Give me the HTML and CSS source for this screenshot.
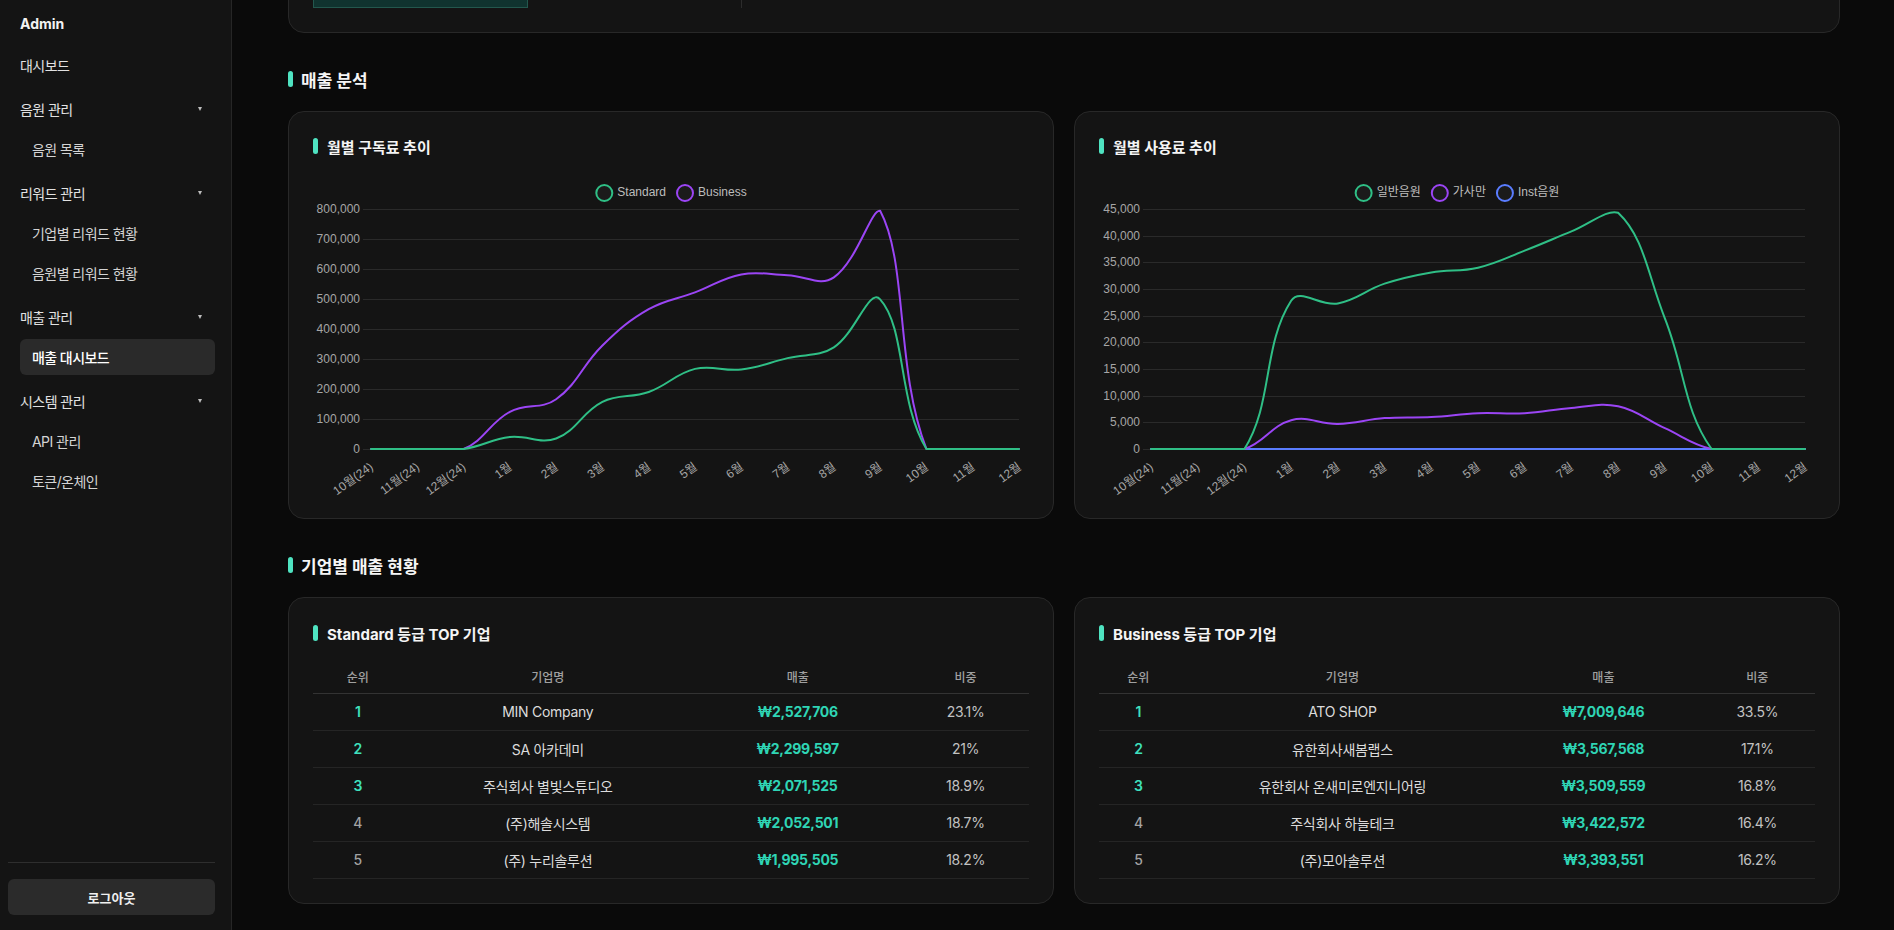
FILE: index.html
```html
<!DOCTYPE html>
<html lang="ko">
<head>
<meta charset="utf-8">
<title>매출 대시보드</title>
<link rel="stylesheet" href="styles.css">
</head>
<body>
<aside class="sidebar">
  <div class="brand">Admin</div>
  <nav class="nav">
    <div class="nav-group">
      <div class="nav-head">대시보드</div>
    </div>
    <div class="nav-group">
      <div class="nav-head">음원 관리<span class="caret"></span></div>
      <div class="nav-item">음원 목록</div>
    </div>
    <div class="nav-group">
      <div class="nav-head">리워드 관리<span class="caret"></span></div>
      <div class="nav-item">기업별 리워드 현황</div>
      <div class="nav-item">음원별 리워드 현황</div>
    </div>
    <div class="nav-group">
      <div class="nav-head">매출 관리<span class="caret"></span></div>
      <div class="nav-item active">매출 대시보드</div>
    </div>
    <div class="nav-group">
      <div class="nav-head">시스템 관리<span class="caret"></span></div>
      <div class="nav-item">API 관리</div>
      <div class="nav-item">토큰/온체인</div>
    </div>
  </nav>
  <div class="sidebar-foot">
    <div class="foot-line"></div>
    <button class="logout">로그아웃</button>
  </div>
</aside>

<main class="main">
  <div class="card top-card">
    <div class="top-row">
      <div class="top-left"><div class="top-bar"></div></div>
      <div class="top-right"></div>
    </div>
  </div>

  <section class="section">
    <h2 class="section-title"><span class="accent"></span>매출 분석</h2>
    <div class="grid2">
      <div class="card chart-card">
        <h3 class="card-title"><span class="accent"></span>월별 구독료 추이</h3>
        <svg class="chart" id="chart-fee"></svg>
      </div>
      <div class="card chart-card">
        <h3 class="card-title"><span class="accent"></span>월별 사용료 추이</h3>
        <svg class="chart" id="chart-use"></svg>
      </div>
    </div>
  </section>

  <section class="section">
    <h2 class="section-title"><span class="accent"></span>기업별 매출 현황</h2>
    <div class="grid2">
      <div class="card table-card">
        <h3 class="card-title"><span class="accent"></span>Standard 등급 TOP 기업</h3>
        <table class="rank-table std">
          <colgroup><col class="c1"><col class="c2"><col class="c3"><col class="c4"></colgroup>
          <thead><tr><th>순위</th><th>기업명</th><th>매출</th><th>비중</th></tr></thead>
          <tbody>
            <tr><td class="rank top">1</td><td>MIN Company</td><td class="amount">₩2,527,706</td><td class="pct">23.1%</td></tr>
            <tr><td class="rank top">2</td><td>SA 아카데미</td><td class="amount">₩2,299,597</td><td class="pct">21%</td></tr>
            <tr><td class="rank top">3</td><td>주식회사 별빛스튜디오</td><td class="amount">₩2,071,525</td><td class="pct">18.9%</td></tr>
            <tr><td class="rank">4</td><td>(주)해솔시스템</td><td class="amount">₩2,052,501</td><td class="pct">18.7%</td></tr>
            <tr><td class="rank">5</td><td>(주) 누리솔루션</td><td class="amount">₩1,995,505</td><td class="pct">18.2%</td></tr>
          </tbody>
        </table>
      </div>
      <div class="card table-card">
        <h3 class="card-title"><span class="accent"></span>Business 등급 TOP 기업</h3>
        <table class="rank-table biz">
          <colgroup><col class="c1"><col class="c2"><col class="c3"><col class="c4"></colgroup>
          <thead><tr><th>순위</th><th>기업명</th><th>매출</th><th>비중</th></tr></thead>
          <tbody>
            <tr><td class="rank top">1</td><td>ATO SHOP</td><td class="amount">₩7,009,646</td><td class="pct">33.5%</td></tr>
            <tr><td class="rank top">2</td><td>유한회사새봄랩스</td><td class="amount">₩3,567,568</td><td class="pct">17.1%</td></tr>
            <tr><td class="rank top">3</td><td>유한회사 온새미로엔지니어링</td><td class="amount">₩3,509,559</td><td class="pct">16.8%</td></tr>
            <tr><td class="rank">4</td><td>주식회사 하늘테크</td><td class="amount">₩3,422,572</td><td class="pct">16.4%</td></tr>
            <tr><td class="rank">5</td><td>(주)모아솔루션</td><td class="amount">₩3,393,551</td><td class="pct">16.2%</td></tr>
          </tbody>
        </table>
      </div>
    </div>
  </section>
</main>
<script src="app.js"></script>
</body>
</html>
```

FILE: styles.css
```css
* { box-sizing: border-box; margin: 0; padding: 0; }
html, body { height: 100%; }
body {
  font-family: Inter, "Noto Sans CJK KR", "Noto Sans", sans-serif;
  background: #0a0a0a;
  color: #e8e8e8;
  display: flex;
  height: 100vh;
  overflow: hidden;
}

/* Sidebar */
.sidebar {
  width: 232px;
  flex: none;
  background: #141414;
  border-right: 1px solid #262626;
  display: flex;
  flex-direction: column;
  padding-top: 13px;
}
.brand {
  padding-left: 20px;
  font-size: 14px;
  font-weight: 700;
  line-height: 22px;
  color: #f2f2f2;
  margin-bottom: 12px;
}
.nav {
  display: flex;
  flex-direction: column;
  gap: 8px;
  padding: 0 16px 0 20px;
}
.nav-group { display: flex; flex-direction: column; gap: 4px; }
.nav-head {
  height: 36px;
  display: flex;
  align-items: center;
  justify-content: space-between;
  padding-right: 13px;
  font-size: 14px;
  color: #e2e2e2;
  letter-spacing: -0.04em;
}
.caret {
  width: 0;
  height: 0;
  border-left: 2.5px solid transparent;
  border-right: 2.5px solid transparent;
  border-top: 4px solid #bdbdbd;
}
.nav-item {
  height: 36px;
  display: flex;
  align-items: center;
  padding-left: 12px;
  font-size: 14px;
  color: #d4d4d4;
  border-radius: 6px;
  letter-spacing: -0.04em;
}
.nav-item.active { background: #2a2a2a; color: #fff; font-weight: 500; }
.sidebar-foot { margin-top: auto; padding: 0 16px 15px 8px; }
.foot-line { height: 1px; background: #2e2e2e; }
.logout {
  margin-top: 16px;
  width: 100%;
  height: 36px;
  border: 0;
  border-radius: 6px;
  background: #2b2b2b;
  color: #f0f0f0;
  font-family: Inter, "Noto Sans CJK KR", sans-serif;
  font-size: 13px;
  font-weight: 600;
}

/* Main */
.main {
  flex: 1;
  min-width: 0;
  padding: 0 54px 0 56px;
  overflow: hidden;
}
.card {
  background: #141414;
  border: 1px solid #282828;
  border-radius: 16px;
}
.top-card {
  height: 110px;
  margin-top: -77px;
  padding: 24px;
}
.top-row { display: flex; height: 60px; }
.top-left { width: 428px; display: flex; align-items: flex-end; }
.top-bar { width: 215px; height: 40px; background: #10332f; border: 1px solid #23574d; }
.top-right { border-left: 1px solid #2c2c2c; }

.section { margin-top: 34px; }
.section-title {
  display: flex;
  align-items: center;
  gap: 8px;
  height: 24px;
  font-size: 17px;
  font-weight: 700;
  color: #f5f5f5;
  margin-bottom: 20px;
}
.accent {
  width: 5px;
  height: 16px;
  border-radius: 3px;
  background: #4fe3c1;
  flex: none;
}
.grid2 {
  display: grid;
  grid-template-columns: 1fr 1fr;
  gap: 20px;
}
.card-title {
  display: flex;
  align-items: center;
  gap: 9px;
  height: 24px;
  font-size: 15px;
  font-weight: 700;
  color: #f5f5f5;
}

/* Charts */
.chart-card { height: 408px; padding: 24px; }
.chart-card .card-title { margin-top: -2px; }
.chart { display: block; width: 100%; height: 322px; margin-top: 14px; overflow: visible; }
.chart .tick { font-family: "Liberation Sans", "Noto Sans CJK KR", sans-serif; font-size: 12px; fill: #a6a6a6; }
.chart .legend-text { font-family: "Liberation Sans", "Noto Sans CJK KR", sans-serif; font-size: 12px; fill: #bdbdbd; }
.chart .grid { stroke: #2a2a2a; stroke-width: 1; }
.chart .line { fill: none; stroke-width: 2; stroke-linejoin: round; stroke-linecap: round; }
.chart .legend-dot { fill: #1b1b1b; stroke-width: 2; }

/* Tables */
.table-card { padding: 24px; }
.table-card .card-title { margin-top: -1px; margin-bottom: 16px; }
.rank-table { width: 100%; border-collapse: collapse; table-layout: fixed; }
.rank-table th {
  height: 32px;
  font-size: 12px;
  font-weight: 500;
  color: #a0a0a0;
  border-bottom: 1px solid #333;
  text-align: center;
}
.rank-table td {
  height: 37px;
  font-size: 14px;
  text-align: center;
  color: #dcdcdc;
  border-bottom: 1px solid #252525;
  letter-spacing: -0.02em;
}
.rank-table .rank { color: #a3a3a3; font-weight: 500; }
.rank-table .rank.top { color: #3fe0bd; font-weight: 600; }
.rank-table .amount { color: #2fd5b5; font-weight: 700; }
.rank-table .pct { color: #c2c2c2; }

.std .c1 { width: 12.5%; }
.std .c2 { width: 40.6%; }
.std .c3 { width: 29.2%; }
.std .c4 { width: 17.7%; }
.biz .c1 { width: 11%; }
.biz .c2 { width: 46%; }
.biz .c3 { width: 26.9%; }
.biz .c4 { width: 16.1%; }
```

FILE: app.js
```js
(function () {
  var NS = 'http://www.w3.org/2000/svg';
  var labels = ['10월(24)', '11월(24)', '12월(24)', '1월', '2월', '3월', '4월', '5월', '6월', '7월', '8월', '9월', '10월', '11월', '12월'];
  var GREEN = '#2fbf86', PURPLE = '#9b45f5', BLUE = '#5a7dff';
  var charts = [
    { id: 'chart-fee', max: 800000, step: 100000, series: [
      { name: 'Standard', color: GREEN, data: [0, 0, 0, 40000, 35000, 157000, 190000, 267000, 265000, 303000, 339000, 499000, 0, 0, 0] },
      { name: 'Business', color: PURPLE, data: [0, 0, 0, 124000, 166000, 345000, 466000, 522000, 582000, 579000, 572000, 794000, 0, 0, 0] }
    ] },
    { id: 'chart-use', max: 45000, step: 5000, series: [
      { name: '일반음원', color: GREEN, data: [0, 0, 0, 27800, 27300, 31000, 33100, 34000, 37200, 40800, 44300, 24500, 0, 0, 0] },
      { name: '가사만', color: PURPLE, data: [0, 0, 0, 5400, 4700, 5800, 6000, 6700, 6700, 7700, 8000, 3900, 0, 0, 0] },
      { name: 'Inst음원', color: BLUE, data: [0, 0, 0, 0, 0, 0, 0, 0, 0, 0, 0, 0, 0, 0, 0] }
    ] }
  ];

  function el(tag, attrs, parent) {
    var e = document.createElementNS(NS, tag);
    for (var k in attrs) e.setAttribute(k, attrs[k]);
    if (parent) parent.appendChild(e);
    return e;
  }
  function fmt(n) { return String(n).replace(/\B(?=(\d{3})+(?!\d))/g, ','); }
  function clamp(v, a, b) { return Math.max(a, Math.min(b, v)); }

  function buildPath(pts, t, area) {
    var cps = pts.map(function (p, i) {
      var prev = pts[i - 1] || p, next = pts[i + 1] || p;
      var d01 = Math.hypot(p.x - prev.x, p.y - prev.y);
      var d12 = Math.hypot(next.x - p.x, next.y - p.y);
      var s01 = d01 / (d01 + d12), s12 = d12 / (d01 + d12);
      if (isNaN(s01)) s01 = 0;
      if (isNaN(s12)) s12 = 0;
      var fa = t * s01, fb = t * s12;
      var c1 = { x: p.x - fa * (next.x - prev.x), y: p.y - fa * (next.y - prev.y) };
      var c2 = { x: p.x + fb * (next.x - prev.x), y: p.y + fb * (next.y - prev.y) };
      [c1, c2].forEach(function (c) {
        c.x = clamp(c.x, area.left, area.right);
        c.y = clamp(c.y, area.top, area.bottom);
      });
      return { c1: c1, c2: c2 };
    });
    var d = 'M' + pts[0].x.toFixed(2) + ',' + pts[0].y.toFixed(2);
    for (var i = 1; i < pts.length; i++) {
      d += ' C' + cps[i - 1].c2.x.toFixed(2) + ',' + cps[i - 1].c2.y.toFixed(2) + ' ' +
        cps[i].c1.x.toFixed(2) + ',' + cps[i].c1.y.toFixed(2) + ' ' +
        pts[i].x.toFixed(2) + ',' + pts[i].y.toFixed(2);
    }
    return d;
  }

  charts.forEach(function (c) {
    var svg = document.getElementById(c.id);
    var W = svg.getBoundingClientRect().width;
    var top = 37, bottom = 277;

    var gridG = el('g', {}, svg);
    var yG = el('g', {}, svg);
    var xG = el('g', {}, svg);
    var linesG = el('g', {}, svg);
    var legendG = el('g', {}, svg);

    var ticks = [];
    for (var v = 0; v <= c.max; v += c.step) ticks.push(v);
    var maxW = 0;
    var texts = ticks.map(function (v) {
      var t = el('text', { 'class': 'tick', 'text-anchor': 'end', 'dominant-baseline': 'middle' }, yG);
      t.textContent = fmt(v);
      maxW = Math.max(maxW, t.getComputedTextLength());
      return t;
    });
    var labelRight = Math.round(4 + maxW);
    var left = labelRight + 11;
    var right = Math.round(W - 10);

    ticks.forEach(function (v, i) {
      var y = Math.round(bottom - (bottom - top) * v / c.max) + 0.5;
      texts[i].setAttribute('x', labelRight);
      texts[i].setAttribute('y', y);
      el('line', { 'class': 'grid', x1: left - 8, x2: right, y1: y, y2: y }, gridG);
    });

    var step = (right - left) / (labels.length - 1);
    labels.forEach(function (lab, i) {
      var x = left + i * step;
      var t = el('text', {
        'class': 'tick', 'text-anchor': 'end', 'dominant-baseline': 'middle',
        transform: 'translate(' + (x + 1).toFixed(1) + ',' + (bottom + 17) + ') rotate(-36)'
      }, xG);
      t.textContent = lab;
    });

    var area = { left: left, right: right, top: top, bottom: bottom };
    for (var s = c.series.length - 1; s >= 0; s--) {
      var ser = c.series[s];
      var pts = ser.data.map(function (val, i) {
        return { x: left + i * step, y: bottom - (bottom - top) * val / c.max };
      });
      el('path', { 'class': 'line', d: buildPath(pts, 0.4, area), stroke: ser.color }, linesG);
    }

    var items = c.series.map(function (ser) {
      var t = el('text', { 'class': 'legend-text', 'dominant-baseline': 'middle', y: 21 }, legendG);
      t.textContent = ser.name;
      return { ser: ser, t: t, w: t.getComputedTextLength() };
    });
    var total = 0;
    items.forEach(function (it, i) { total += 22 + it.w + (i ? 10 : 0); });
    var x0 = (W - total) / 2;
    items.forEach(function (it) {
      el('circle', { 'class': 'legend-dot', cx: x0 + 9, cy: 21, r: 8, stroke: it.ser.color }, legendG);
      it.t.setAttribute('x', x0 + 22);
      x0 += 22 + it.w + 10;
    });
  });
})();
```
